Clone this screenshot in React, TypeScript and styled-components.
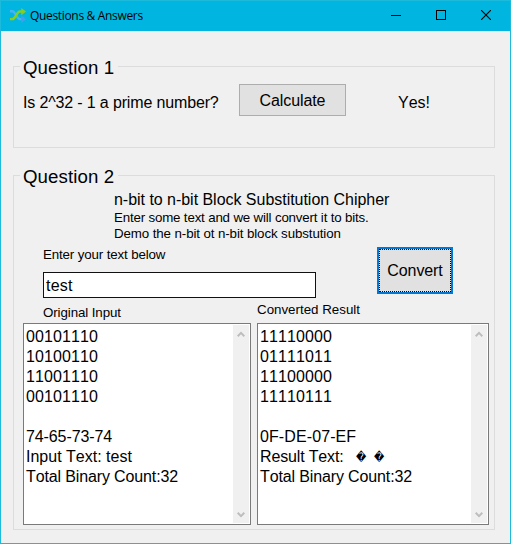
import React from "react";
import styled, { createGlobalStyle } from "styled-components";

const GlobalStyle = createGlobalStyle`
  *, *::before, *::after { box-sizing: border-box; }
  body { margin: 0; background: #f0f0f0; overflow: hidden; }
`;

const Window = styled.div`
  display: flex;
  flex-direction: column;
  width: 511px;
  height: 544px;
  border: 1px solid #1cbadb;
  background: #f0f0f0;
  color: #000;
  font-family: "Liberation Sans", Arial, sans-serif;
  font-size: 16px;
  font-kerning: none;
  line-height: 20px;
`;

const TitleBar = styled.header`
  display: flex;
  align-items: center;
  flex: none;
  height: 30px;
  padding: 0 2px 0 8px;
  background: #00b6e1;
`;

const Title = styled.h1`
  flex: 1;
  margin: 0 0 0 4px;
  font: 400 12px/16px "Open Sans", "Noto Sans", sans-serif;
  letter-spacing: -0.33px;
`;

const Controls = styled.div`
  display: flex;
`;

const ControlButton = styled.button`
  display: flex;
  align-items: center;
  justify-content: center;
  width: 45px;
  height: 30px;
  padding: 0 0 2px;
  border: 0;
  background: transparent;
`;

const Client = styled.main`
  padding: 26px 15px 0 12px;
`;

const Group = styled.section<{ $height: number }>`
  height: ${(p) => p.$height}px;
`;

const Legend = styled.h2`
  display: flex;
  align-items: center;
  height: 20px;
  margin: 0;
  font-size: 18.67px;
  font-weight: 400;
  &::before, &::after {
    content: "";
    height: 11px;
    border-top: 1px solid #dcdcdc;
    align-self: flex-end;
  }
  &::before { width: 7px; border-left: 1px solid #dcdcdc; }
  &::after { flex: 1; border-right: 1px solid #dcdcdc; }
`;

const LegendText = styled.span`
  width: 98px;
  padding: 2px 0 0 3px;
  letter-spacing: 0.1px;
  white-space: nowrap;
`;

const GroupBody = styled.div<{ $height: number }>`
  height: ${(p) => p.$height}px;
  border: 1px solid #dcdcdc;
  border-top: 0;
`;

const PrimeRow = styled.div`
  display: flex;
  align-items: flex-start;
  padding: 7px 0 0 9px;
`;

const Text = styled.span<{ $width?: number; $top?: number; $spacing?: number }>`
  width: ${(p) => (p.$width ? `${p.$width}px` : "auto")};
  margin-top: ${(p) => p.$top ?? 0}px;
  letter-spacing: ${(p) => p.$spacing ?? 0}px;
  white-space: nowrap;
`;

const Button = styled.button`
  width: 107px;
  height: 32px;
  padding: 1px 0 0;
  border: 1px solid #adadad;
  background: #e1e1e1;
  color: #000;
  font: inherit;
  font-kerning: none;
  letter-spacing: -0.1px;
`;

const CalculateButton = styled(Button)`
  margin-right: 52px;
`;

const FocusedButton = styled(Button)`
  width: 76px;
  height: 47px;
  padding: 0;
  border: 2px solid #0078d7;
  outline: 1px dotted #000;
  outline-offset: -3px;
`;

const Heading = styled.div`
  display: flex;
  flex-direction: column;
  padding: 4px 0 0 100px;
`;

const Small = styled.span<{ $spacing?: number }>`
  font-size: 13.33px;
  line-height: 16px;
  letter-spacing: ${(p) => p.$spacing ?? 0}px;
  white-space: nowrap;
`;

const EntryRow = styled.div`
  display: flex;
  align-items: flex-start;
  justify-content: space-between;
  height: 59px;
  padding: 5px 41px 0 29px;
`;

const Field = styled.label`
  display: flex;
  flex-direction: column;
  gap: 9px;
`;

const Input = styled.input`
  width: 273px;
  height: 26px;
  padding: 1px 2px 0;
  border: 1px solid #111;
  border-radius: 0;
  background: #fff;
  color: #000;
  font: inherit;
  font-size: 16px;
  letter-spacing: 0.2px;
  outline: 0;
`;

const Results = styled.div`
  display: flex;
  gap: 6px;
  padding-left: 9px;
`;

const Result = styled.div<{ $width: number; $indent: number; $labelTop: number }>`
  display: flex;
  flex-direction: column;
  width: ${(p) => p.$width}px;
  & > ${Small} {
    height: ${(p) => 22 - p.$labelTop}px;
    margin: ${(p) => p.$labelTop}px 0 0 ${(p) => p.$indent}px;
  }
`;

const Output = styled.div`
  display: flex;
  justify-content: space-between;
  height: 202px;
  padding: 1px;
  border: 1px solid #7a7a7a;
  background: #fff;
`;

const Lines = styled.div`
  display: flex;
  flex-direction: column;
  padding: 2px 0 0 1px;
`;

const Line = styled.span<{ $spacing?: number }>`
  height: 20px;
  letter-spacing: ${(p) => p.$spacing ?? 0}px;
  white-space: pre;
`;

const Replacement = styled.span`
  display: inline-block;
  width: 18px;
  height: 20px;
  vertical-align: top;
  font: 10px/20px "DejaVu Sans", sans-serif;
  letter-spacing: 0;
  text-align: center;
  transform: scaleY(1.2);
`;

const ScrollBar = styled.div`
  display: flex;
  flex-direction: column;
  align-items: center;
  justify-content: space-between;
  width: 16px;
  padding: 5px 0 4px;
  background: #f0f0f0;
`;

const ShuffleIcon = () => (
  <svg width="17" height="16" viewBox="0 0 17 16" fill="none">
    <path d="M1 3.2h2.3c3.2 0 4.2 7.9 7.7 7.9h2" stroke="#48b2f4" strokeWidth="2.4" />
    <path d="M12.3 7.4l4.7 3.8-4.7 3.8z" fill="#419fed" />
    <path d="M1 11.1h2.3c3.5 0 4.2-7.6 7.7-7.6h2" stroke="#86cf22" strokeWidth="2.4" />
    <path d="M12.3 0L17 3.6l-4.7 3.6z" fill="#8acb1c" />
  </svg>
);

const Chevron = ({ down = false }: { down?: boolean }) => (
  <svg width="8" height="8" viewBox="0 0 8 8" fill="none" stroke="#bdbdbd" strokeWidth="2">
    <path d={down ? "M.7 1.8L4 5.1l3.3-3.3" : "M.7 6.2L4 2.9l3.3 3.3"} />
  </svg>
);

type OutputLine = { text: string; spacing?: number; unknown?: number };

const original: OutputLine[] = [
  { text: "00101110", spacing: 0.1 },
  { text: "10100110", spacing: 0.1 },
  { text: "11001110", spacing: 0.1 },
  { text: "00101110", spacing: 0.1 },
  { text: "" },
  { text: "74-65-73-74", spacing: -0.1 },
  { text: "Input Text: test" },
  { text: "Total Binary Count:32", spacing: -0.13 },
];

const converted: OutputLine[] = [
  { text: "11110000", spacing: 0.1 },
  { text: "01111011", spacing: 0.1 },
  { text: "11100000", spacing: 0.1 },
  { text: "11110111", spacing: 0.1 },
  { text: "" },
  { text: "0F-DE-07-EF", spacing: 0.1 },
  { text: "Result Text:  ", spacing: -0.15, unknown: 2 },
  { text: "Total Binary Count:32", spacing: -0.13 },
];

const OutputBox = ({ lines }: { lines: OutputLine[] }) => (
  <Output>
    <Lines>
      {lines.map((line, i) => (
        <Line key={i} $spacing={line.spacing}>
          {line.text}
          {Array.from({ length: line.unknown ?? 0 }, (_, n) => (
            <Replacement key={n}>{"\uFFFD"}</Replacement>
          ))}
        </Line>
      ))}
    </Lines>
    <ScrollBar>
      <Chevron />
      <Chevron down />
    </ScrollBar>
  </Output>
);

export default function App() {
  return (
    <>
      <GlobalStyle />
      <Window>
        <TitleBar>
          <ShuffleIcon />
          <Title>Questions &amp; Answers</Title>
          <Controls>
            <ControlButton aria-label="Minimize">
              <svg width="10" height="10" shapeRendering="crispEdges">
                <path d="M0 5.5h10" stroke="#000" />
              </svg>
            </ControlButton>
            <ControlButton aria-label="Maximize">
              <svg width="10" height="10" shapeRendering="crispEdges">
                <path d="M.5.5h9v9h-9z" fill="none" stroke="#000" />
              </svg>
            </ControlButton>
            <ControlButton aria-label="Close">
              <svg width="10" height="10">
                <path d="M0 0l10 10M10 0L0 10" stroke="#000" strokeWidth="1.1" />
              </svg>
            </ControlButton>
          </Controls>
        </TitleBar>
        <Client>
          <Group $height={109}>
            <Legend>
              <LegendText>Question 1</LegendText>
            </Legend>
            <GroupBody $height={71}>
              <PrimeRow>
                <Text $width={216} $top={9} $spacing={-0.15}>
                  Is 2^32 - 1 a prime number?
                </Text>
                <CalculateButton>Calculate</CalculateButton>
                <Text $top={9}>Yes!</Text>
              </PrimeRow>
            </GroupBody>
          </Group>
          <Group $height={364}>
            <Legend>
              <LegendText>Question 2</LegendText>
            </Legend>
            <GroupBody $height={344}>
              <Heading>
                <Text $spacing={-0.03}>n-bit to n-bit Block Substitution Chipher</Text>
                <Small $spacing={-0.18}>Enter some text and we will convert it to bits.</Small>
                <Small $spacing={-0.11}>Demo the n-bit ot n-bit block substution</Small>
              </Heading>
              <EntryRow>
                <Field>
                  <Small $spacing={-0.14}>Enter your text below</Small>
                  <Input defaultValue="test" />
                </Field>
                <FocusedButton>Convert</FocusedButton>
              </EntryRow>
              <Results>
                <Result $width={228} $indent={20} $labelTop={4}>
                  <Small $spacing={-0.1}>Original Input</Small>
                  <OutputBox lines={original} />
                </Result>
                <Result $width={232} $indent={0} $labelTop={1}>
                  <Small>Converted Result</Small>
                  <OutputBox lines={converted} />
                </Result>
              </Results>
            </GroupBody>
          </Group>
        </Client>
      </Window>
    </>
  );
}
